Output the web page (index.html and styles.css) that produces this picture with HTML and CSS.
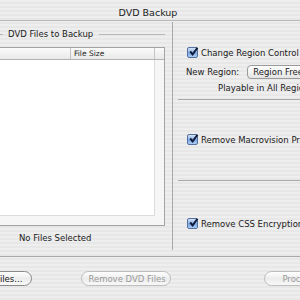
FILE: index.html
```html
<!DOCTYPE html>
<html lang="en">
<head>
    <meta charset="UTF-8">
    <title>DVD Backup</title>
    <link rel="stylesheet" href="styles.css">
</head>
<body>
    <div class="window">
        <div class="titlebar">DVD Backup</div>

        <div class="main">
            <!-- File list -->
            <div class="files">
                <div class="group-title">
                    <span class="rule short"></span>
                    <span>DVD Files to Backup</span>
                    <span class="rule"></span>
                </div>
                <div class="table">
                    <div class="table-head">
                        <span class="col-name"></span>
                        <span class="col-size">File Size</span>
                        <span class="col-corner"></span>
                    </div>
                    <div class="table-body">
                        <div class="list"></div>
                    </div>
                </div>
                <div class="status">No Files Selected</div>
            </div>

            <div class="divider"></div>

            <!-- Options -->
            <div class="options">
                <div class="check-row first">
                    <span class="checkbox"><svg viewBox="0 0 10 10"><path d="M2 5 L4.2 7.6 L8.6 1.6"/></svg></span>
                    <span>Change Region Control</span>
                </div>
                <div class="region-row">
                    <span>New Region:</span>
                    <span class="popup">Region Free</span>
                </div>
                <div class="playable">Playable in All Regions</div>
                <div class="sep"></div>

                <div class="check-row middle">
                    <span class="checkbox"><svg viewBox="0 0 10 10"><path d="M2 5 L4.2 7.6 L8.6 1.6"/></svg></span>
                    <span>Remove Macrovision Protection</span>
                </div>
                <div class="sep lower"></div>

                <div class="check-row last">
                    <span class="checkbox"><svg viewBox="0 0 10 10"><path d="M2 5 L4.2 7.6 L8.6 1.6"/></svg></span>
                    <span>Remove CSS Encryption</span>
                </div>
            </div>
        </div>

        <div class="buttons">
            <button class="btn add">Add DVD Files...</button>
            <button class="btn remove" disabled>Remove DVD Files</button>
            <button class="btn process" disabled>Process</button>
        </div>
    </div>
</body>
</html>
```

FILE: styles.css
```css
body {
    margin: 0;
    font-family: "DejaVu Sans", sans-serif;
    font-size: 8.5px;
    color: #1a1a1a;
}
.window {
    width: 300px;
    height: 300px;
    overflow: hidden;
    background: repeating-linear-gradient(#eeeeee 0 2px, #e7e7e7 2px 4px);
}
.titlebar {
    height: 21px;
    line-height: 26px;
    text-align: center;
    font-size: 9.5px;
    color: #222;
    padding-right: 4px;
    border-bottom: 1px solid #b9b9b9;
    box-sizing: border-box;
}
.main {
    display: flex;
    height: 235px;
    border-bottom: 1px solid #a9a9a9;
}
.files {
    width: 172px;
    display: flex;
    flex-direction: column;
}
.group-title {
    display: flex;
    align-items: center;
    gap: 6px;
    margin: 8px 7px 0 0;
    height: 10px;
}
.rule {
    flex: 1;
    height: 1px;
    background: #b8b8b8;
}
.rule.short {
    flex: none;
    width: 3px;
    margin-right: -1px;
}
.table {
    margin: 8px 0 0 -20px;
    width: 185px;
    height: 179px;
    border: 1px solid #a3a3a3;
    box-sizing: border-box;
    display: flex;
    flex-direction: column;
}
.table-head {
    display: flex;
    height: 11px;
    background: linear-gradient(#fafafa, #e9e9e9);
    border-bottom: 1px solid #b3b3b3;
    font-size: 7.5px;
    line-height: 11px;
}
.col-name {
    flex: 1;
}
.col-size {
    width: 84px;
    padding-left: 3px;
    box-sizing: border-box;
    border-left: 1px solid #c4c4c4;
}
.col-corner {
    width: 9px;
    border-left: 1px solid #c4c4c4;
}
.table-body {
    flex: 1;
    background: #f6f6f6;
    padding: 0 9px 10px 0;
}
.list {
    height: 100%;
    background: #fff;
    border-right: 1px solid #dcdcdc;
    border-bottom: 1px solid #dcdcdc;
}
.status {
    margin-top: 7px;
    padding-left: 19px;
}
.divider {
    width: 1px;
    background: #a9a9a9;
    margin: 1px 0 6px;
}
.options {
    flex: 1;
    white-space: nowrap;
    overflow: hidden;
}
.check-row {
    display: flex;
    align-items: center;
    gap: 3px;
    padding-left: 14px;
    height: 11px;
}
.check-row.first {
    margin-top: 26px;
}
.check-row.middle {
    margin-top: 34px;
}
.check-row.last {
    margin-top: 37px;
}
.checkbox {
    width: 9px;
    height: 9px;
    border: 1px solid #55709e;
    border-radius: 2px;
    background: linear-gradient(#d6e6f8, #7ea9e3 55%, #a9ccf3);
    position: relative;
    flex: none;
}
.checkbox svg {
    position: absolute;
    left: 0;
    top: -2px;
    width: 11px;
    height: 11px;
    fill: none;
    stroke: #0f1d3a;
    stroke-width: 1.8;
}
.region-row {
    display: flex;
    align-items: center;
    margin-top: 8px;
    padding-left: 13px;
    height: 12px;
}
.popup {
    margin-left: 8px;
    height: 12px;
    line-height: 12px;
    padding: 0 20px 0 5px;
    border: 1px solid #9a9a9a;
    border-radius: 4px;
    background: linear-gradient(#ffffff, #e4e4e4);
}
.playable {
    margin-top: 5px;
    padding-left: 45px;
}
.sep {
    height: 1px;
    background: #a9a9a9;
    margin: 6px 0 0 5px;
}
.sep.lower {
    margin-top: 35px;
}
.buttons {
    display: flex;
    align-items: center;
    padding-top: 14px;
}
.btn {
    font-family: "DejaVu Sans", sans-serif;
    font-size: 8.5px;
    height: 15px;
    padding: 0 6px;
    border: 1px solid #8a8a8a;
    border-radius: 8px;
    background: linear-gradient(#ffffff, #ececec 50%, #f8f8f8);
    color: #1a1a1a;
    white-space: nowrap;
}
.btn:disabled {
    color: #9a9a9a;
    border-color: #bdbdbd;
}
.btn.add {
    margin-left: -52px;
    padding-right: 9px;
}
.btn.remove {
    margin-left: 49px;
    width: 90px;
}
.btn.process {
    margin-left: 93px;
    padding-left: 17px;
}
```
